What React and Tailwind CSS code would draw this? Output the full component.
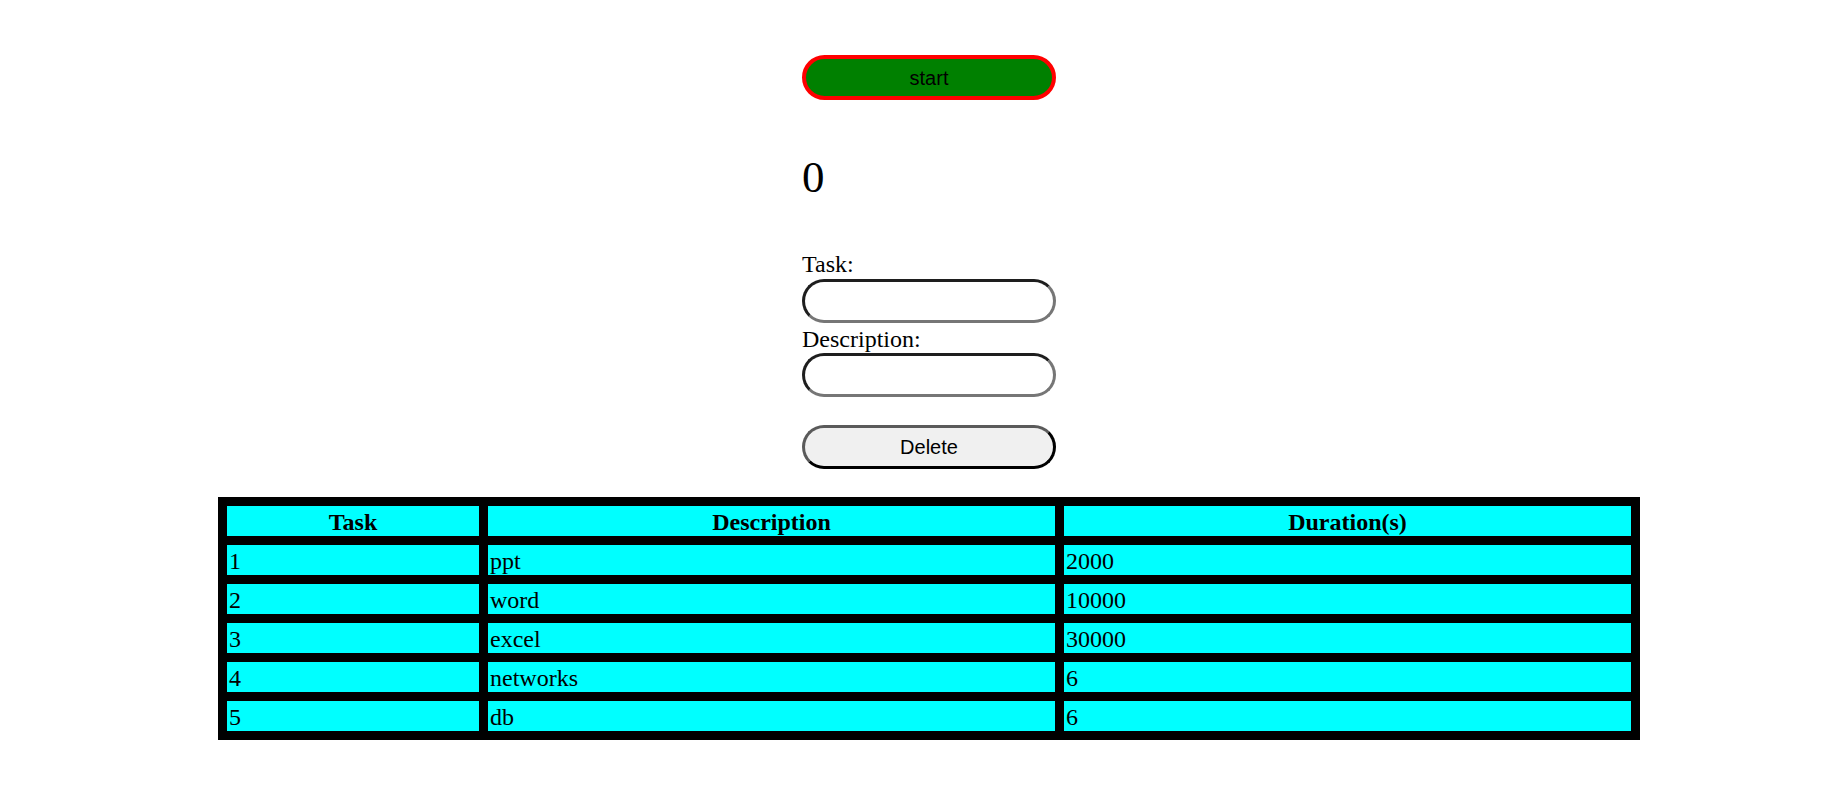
export default function App() {
  const rows = [
    ["1", "ppt", "2000"],
    ["2", "word", "10000"],
    ["3", "excel", "30000"],
    ["4", "networks", "6"],
    ["5", "db", "6"],
  ];
  const serif = { fontFamily: '"Liberation Serif", "Times New Roman", serif' };
  return (
    <div className="min-h-[812px] bg-white text-black pl-[11px]" style={serif}>
      <div className="flex flex-col items-center">
        <div className="w-[254px] flex flex-col pt-[55px]">
          <button className="w-[254px] h-[45px] rounded-full border-[4px] border-[#ff0000] bg-[#008000] text-black text-[20px] font-['Liberation_Sans',Arial,sans-serif]">
            start
          </button>
          <div className="mt-[50.5px] h-[52px] text-[45px] leading-[52px]">0</div>
          <div className="mt-[47px] h-[28px] text-[24px] leading-[28px]">Task:</div>
          <input
            type="text"
            className="mt-[1px] w-[254px] h-[44px] rounded-full border-[3px] border-t-[#1e1e1e] border-l-[#1e1e1e] border-b-[#767676] border-r-[#767676] bg-white outline-none px-3"
          />
          <div className="mt-[2px] h-[28px] text-[24px] leading-[28px]">Description:</div>
          <input
            type="text"
            className="w-[254px] h-[44px] rounded-full border-[3px] border-t-[#1e1e1e] border-l-[#1e1e1e] border-b-[#767676] border-r-[#767676] bg-white outline-none px-3"
          />
          <button className="mt-[28.5px] w-[254px] h-[44px] rounded-full border-[3px] border-t-[#5a5a5a] border-l-[#5a5a5a] border-b-[#000000] border-r-[#000000] bg-[#f0f0f0] text-black text-[20px] font-['Liberation_Sans',Arial,sans-serif]">
            Delete
          </button>
        </div>
        <div className="mt-[28px] bg-black p-[9px] grid grid-cols-[252px_567px_567px] gap-[9px] text-[24px]">
          <div className="h-[30px] bg-[#00ffff] pt-[3px] leading-[27px] font-bold text-center">Task</div>
          <div className="h-[30px] bg-[#00ffff] pt-[3px] leading-[27px] font-bold text-center">Description</div>
          <div className="h-[30px] bg-[#00ffff] pt-[3px] leading-[27px] font-bold text-center">Duration(s)</div>
          {rows.map((r) =>
            r.map((c, i) => (
              <div key={r[0] + "-" + i} className="h-[30px] bg-[#00ffff] pt-[3px] pl-[2px] leading-[27px]">
                {c}
              </div>
            ))
          )}
        </div>
      </div>
    </div>
  );
}
